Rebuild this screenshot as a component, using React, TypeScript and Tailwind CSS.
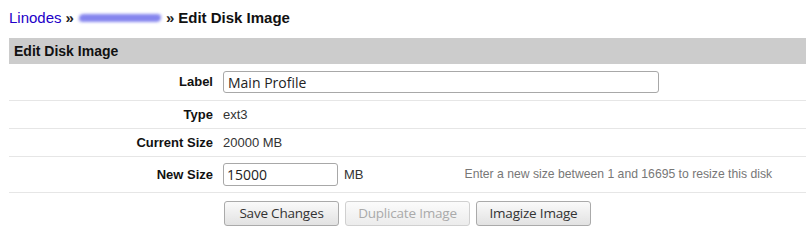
import React from 'react';

const label = "w-[204px] shrink-0 text-right font-bold text-[13px] text-[#111]";
const row = "flex items-center border-b border-[#e6e6e6]";
const btn = "h-[25px] px-0 whitespace-nowrap rounded-[3px] border border-[#aaa] bg-gradient-to-b from-[#fafafa] to-[#e2e2e2] text-[13.5px] text-[#333] font-['Open_Sans',sans-serif] tracking-[-0.2px]";

export default function App() {
    return (
        <div className="w-[806px] h-[247px] bg-white pl-[9px] font-['Liberation_Sans',Arial,sans-serif] text-[#222]">
            <div className="h-[38px] pt-[4px] flex items-center gap-[4px] text-[15px] pb-[6px]">
                <span className="text-[#2200c8]">Linodes</span>
                <span className="font-bold">»</span>
                <span className="w-[82px] h-[8px] rounded-full bg-[#8585ee] blur-[1.5px] -skew-x-6 mx-[1px]" />
                <span className="font-bold">»</span>
                <span className="font-bold text-[#111]">Edit Disk Image</span>
            </div>
            <div className="h-[26px] bg-[#cccccc] flex items-center pl-[5px] font-bold text-[14px] text-[#111]">
                Edit Disk Image
            </div>
            <div className={`${row} h-[37px]`}>
                <span className={label}>Label</span>
                <input
                    defaultValue="Main Profile"
                    className="ml-[10px] w-[436px] h-[22px] border border-[#a8a8a8] rounded-[3px] px-[4px] text-[14px] text-[#222] font-['Open_Sans',sans-serif] outline-none"
                />
            </div>
            <div className={`${row} h-[28px]`}>
                <span className={label}>Type</span>
                <span className="ml-[10px] text-[13px] text-[#333]">ext3</span>
            </div>
            <div className={`${row} h-[28px]`}>
                <span className={label}>Current Size</span>
                <span className="ml-[10px] text-[13px] text-[#333]">20000 MB</span>
            </div>
            <div className={`${row} h-[36px]`}>
                <span className={label}>New Size</span>
                <input
                    defaultValue="15000"
                    className="ml-[10px] w-[115px] h-[23px] border border-[#a8a8a8] rounded-[3px] px-[3px] text-[14px] text-[#222] font-['Open_Sans',sans-serif] outline-none"
                />
                <span className="ml-[6px] text-[13px] text-[#333]">MB</span>
                <span className="ml-[101px] text-[12.2px] text-[#777]">Enter a new size between 1 and 16695 to resize this disk</span>
            </div>
            <div className="flex items-center gap-[6px] pl-[215px] pt-[8px]">
                <button className={`${btn} w-[115px]`}>Save Changes</button>
                <button className={`${btn} w-[125px] text-[#aaa] border-[#d0d0d0] from-[#fbfbfb] to-[#ececec]`}>Duplicate Image</button>
                <button className={`${btn} w-[115px]`}>Imagize Image</button>
            </div>
        </div>
    );
}
